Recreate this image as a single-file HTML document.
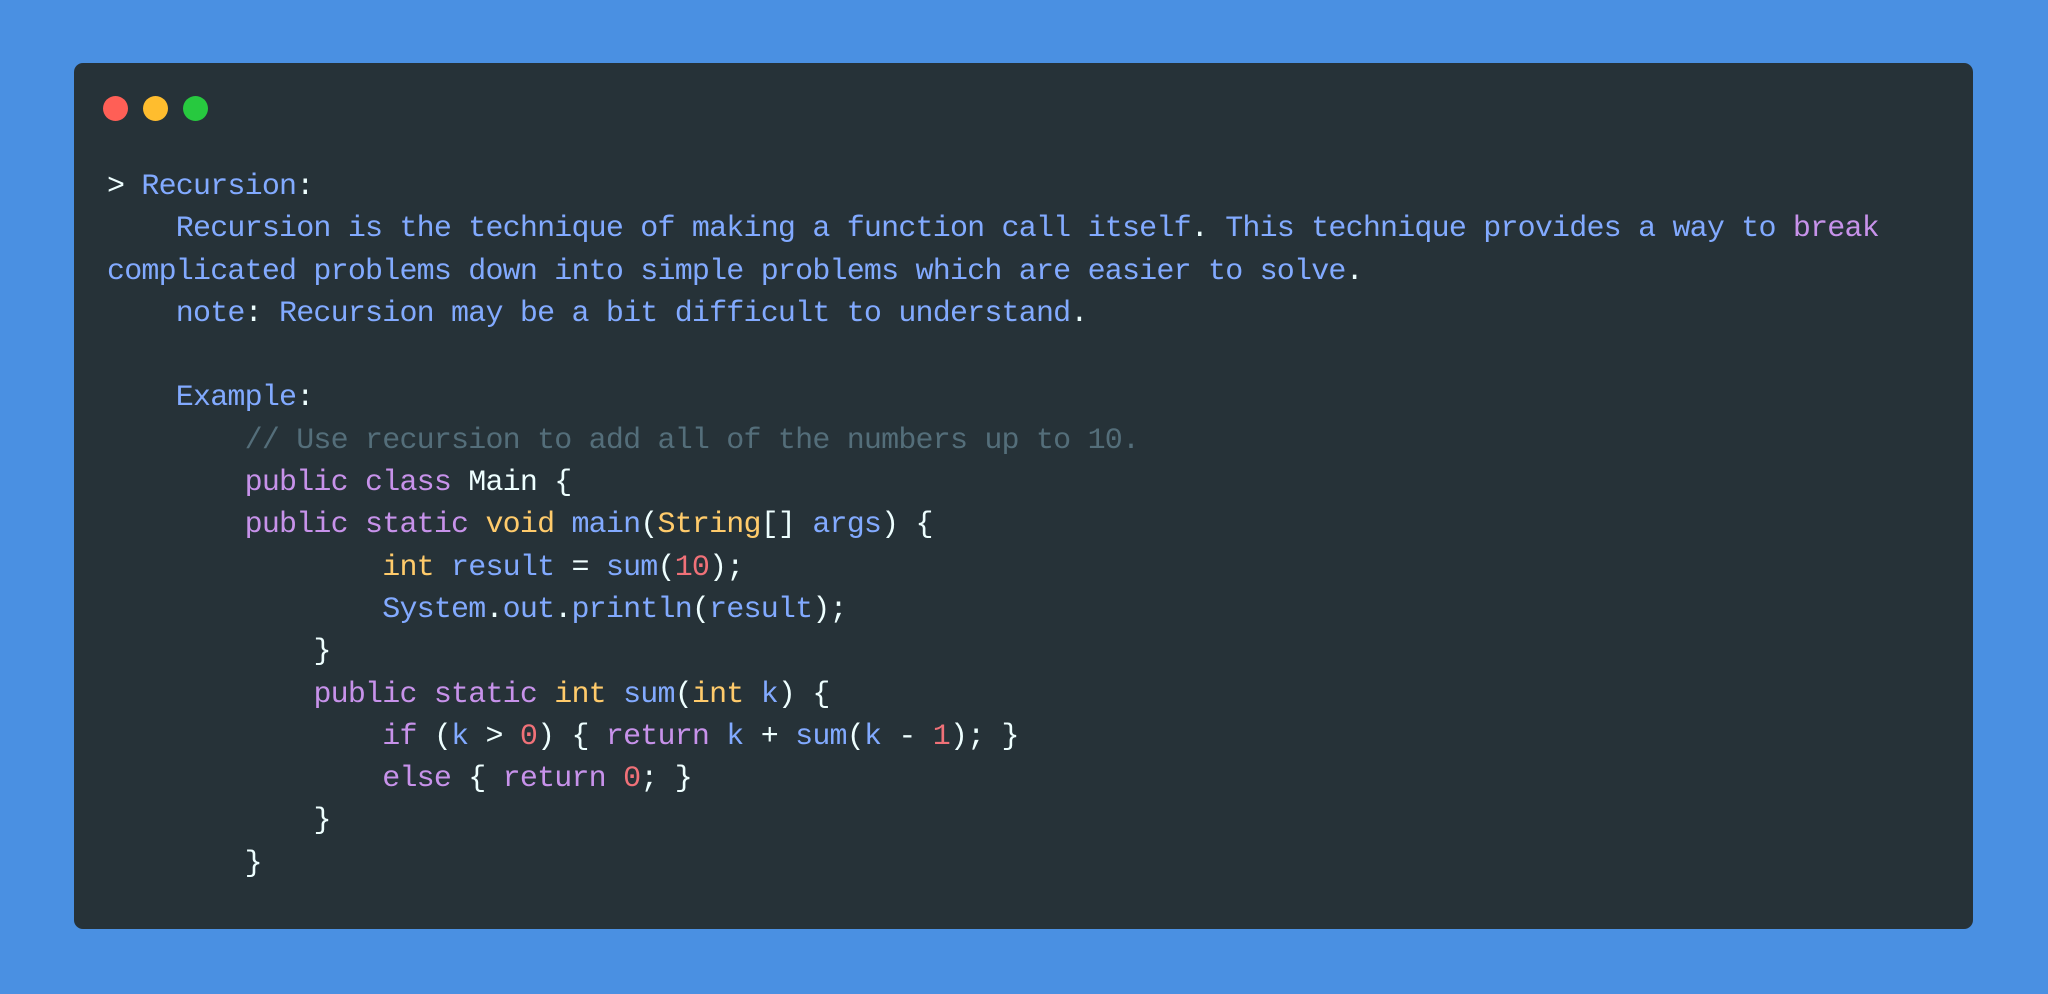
<!DOCTYPE html>
<html><head><meta charset="utf-8"><style>
html,body{margin:0;padding:0;}
body{width:2048px;height:994px;background:#4a90e2;position:relative;overflow:hidden;}
.card{position:absolute;left:74px;top:63px;width:1899px;height:866px;background:#263238;border-radius:9px;}
.dot{position:absolute;top:96px;width:25px;height:25px;border-radius:50%;}
pre{position:absolute;left:107px;top:166px;margin:0;font-family:"Liberation Mono",monospace;font-size:30px;letter-spacing:-0.8px;line-height:42.3px;color:#82aaff;white-space:pre;}
.w{color:#eeffff}.p{color:#c792ea}.y{color:#ffcb6b}.r{color:#f07178}.c{color:#546e7a}
</style></head><body>
<div class="card"></div>
<div class="dot" style="left:103px;background:#ff5f56"></div>
<div class="dot" style="left:143px;background:#ffbd2e"></div>
<div class="dot" style="left:183px;background:#27c93f"></div>
<pre><span class="w">&gt;</span> Recursion<span class="w">:</span>
    Recursion is the technique of making a function call itself<span class="w">.</span> This technique provides a way to <span class="p">break</span>
complicated problems down into simple problems which are easier to solve<span class="w">.</span>
    note<span class="w">:</span> Recursion may be a bit difficult to understand<span class="w">.</span>

    Example<span class="w">:</span>
        <span class="c">// Use recursion to add all of the numbers up to 10.</span>
        <span class="p">public</span> <span class="p">class</span> <span class="w">Main {</span>
        <span class="p">public</span> <span class="p">static</span> <span class="y">void</span> main<span class="w">(</span><span class="y">String</span><span class="w">[]</span> args<span class="w">) {</span>
                <span class="y">int</span> result <span class="w">=</span> sum<span class="w">(</span><span class="r">10</span><span class="w">);</span>
                System<span class="w">.</span>out<span class="w">.</span>println<span class="w">(</span>result<span class="w">);</span>
            <span class="w">}</span>
            <span class="p">public</span> <span class="p">static</span> <span class="y">int</span> sum<span class="w">(</span><span class="y">int</span> k<span class="w">) {</span>
                <span class="p">if</span> <span class="w">(</span>k <span class="w">&gt;</span> <span class="r">0</span><span class="w">) {</span> <span class="p">return</span> k <span class="w">+</span> sum<span class="w">(</span>k <span class="w">-</span> <span class="r">1</span><span class="w">); }</span>
                <span class="p">else</span> <span class="w">{</span> <span class="p">return</span> <span class="r">0</span><span class="w">; }</span>
            <span class="w">}</span>
        <span class="w">}</span></pre>
</body></html>
